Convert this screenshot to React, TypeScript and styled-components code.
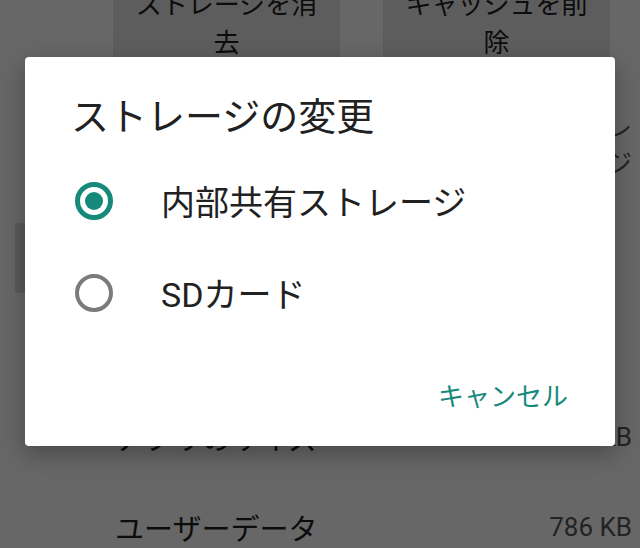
import React, { useState } from 'react'
import styled, { createGlobalStyle } from 'styled-components'

const GlobalStyle = createGlobalStyle`
  html, body {
    margin: 0;
    padding: 0;
  }
  body {
    font-family: Roboto, "Noto Sans CJK JP", sans-serif;
    background: #fafafa;
  }
`

const TEAL = '#17897a'

const Page = styled.div`
  position: relative;
  width: 640px;
  height: 548px;
  overflow: hidden;
  background: #fafafa;
  color: #1d1d1d;
`

const ButtonRow = styled.div`
  display: flex;
  gap: 43px;
  margin-top: -32px;
  padding-left: 113px;
`

const ActionButton = styled.div`
  width: 227px;
  height: 102px;
  box-sizing: border-box;
  padding: 18px 16px 0;
  background: #e2e2e2;
  font-size: 26px;
  line-height: 38px;
  text-align: center;
`

const StorageRow = styled.div`
  display: flex;
  justify-content: space-between;
  align-items: flex-start;
  padding: 40px 8px 41px 115px;
  font-size: 26px;
  line-height: 36px;
`

const StorageValue = styled.div`
  text-align: right;
  color: #555;
`

const ChangeButton = styled.div`
  width: 180px;
  height: 70px;
  margin: 0 0 9px 15px;
  background: #dadada;
`

const InfoRow = styled.div`
  display: flex;
  justify-content: space-between;
  align-items: center;
  height: 90px;
  padding: 0 8px 0 115px;
`

const InfoLabel = styled.span`
  font-size: 29px;
`

const InfoValue = styled.span`
  font-size: 26px;
  color: #555;
`

const Overlay = styled.div`
  position: absolute;
  inset: 0;
  background: rgba(0, 0, 0, 0.59);
  display: flex;
  justify-content: center;
  align-items: flex-start;
  padding-top: 57px;
`

const Dialog = styled.div`
  width: 590px;
  height: 389px;
  background: #fff;
  border-radius: 4px;
  box-shadow: 0 8px 24px rgba(0, 0, 0, 0.3);
  display: flex;
  flex-direction: column;
`

const Title = styled.div`
  padding: 37px 46px 0;
  font-size: 38px;
  line-height: 46px;
  color: #212121;
`

const OptionList = styled.div`
  display: flex;
  flex-direction: column;
  margin-top: 14.5px;
`

const Option = styled.div`
  display: flex;
  align-items: center;
  height: 92px;
  padding-left: 50px;
  gap: 48px;
  font-size: 34px;
  color: #212121;
  cursor: pointer;
`

const Radio = styled.span<{ $checked: boolean }>`
  display: flex;
  align-items: center;
  justify-content: center;
  flex-shrink: 0;
  box-sizing: border-box;
  width: 38px;
  height: 38px;
  border-radius: 50%;
  border: ${({ $checked }) => ($checked ? `5px solid ${TEAL}` : '4px solid #7b7b7b')};

  &::after {
    content: '';
    width: 18px;
    height: 18px;
    border-radius: 50%;
    background: ${TEAL};
    display: ${({ $checked }) => ($checked ? 'block' : 'none')};
  }
`

const Actions = styled.div`
  display: flex;
  justify-content: flex-end;
  margin-top: auto;
  padding: 0 47px 22px;
`

const TextButton = styled.button`
  height: 60px;
  padding: 0;
  border: none;
  background: none;
  color: ${TEAL};
  font-family: Roboto, "Noto Sans CJK JP", sans-serif;
  font-size: 26px;
  cursor: pointer;
`

const options = ['内部共有ストレージ', 'SDカード']

const App: React.FC = () => {
  const [selected, setSelected] = useState(0)

  return (
    <Page>
      <GlobalStyle />
      <ButtonRow>
        <ActionButton>ストレージを消去</ActionButton>
        <ActionButton>キャッシュを削除</ActionButton>
      </ButtonRow>
      <StorageRow>
        <span>使用中のストレージ</span>
        <StorageValue>
          内部共有ストレ
          <br />
          ージ
        </StorageValue>
      </StorageRow>
      <ChangeButton />
      <InfoRow>
        <InfoLabel>合計</InfoLabel>
      </InfoRow>
      <InfoRow>
        <InfoLabel>アプリのサイズ</InfoLabel>
        <InfoValue>20.16 KB</InfoValue>
      </InfoRow>
      <InfoRow>
        <InfoLabel>ユーザーデータ</InfoLabel>
        <InfoValue>786 KB</InfoValue>
      </InfoRow>

      <Overlay>
        <Dialog>
          <Title>ストレージの変更</Title>
          <OptionList>
            {options.map((label, i) => (
              <Option key={label} onClick={() => setSelected(i)}>
                <Radio $checked={selected === i} />
                <span>{label}</span>
              </Option>
            ))}
          </OptionList>
          <Actions>
            <TextButton>キャンセル</TextButton>
          </Actions>
        </Dialog>
      </Overlay>
    </Page>
  )
}

export default App
